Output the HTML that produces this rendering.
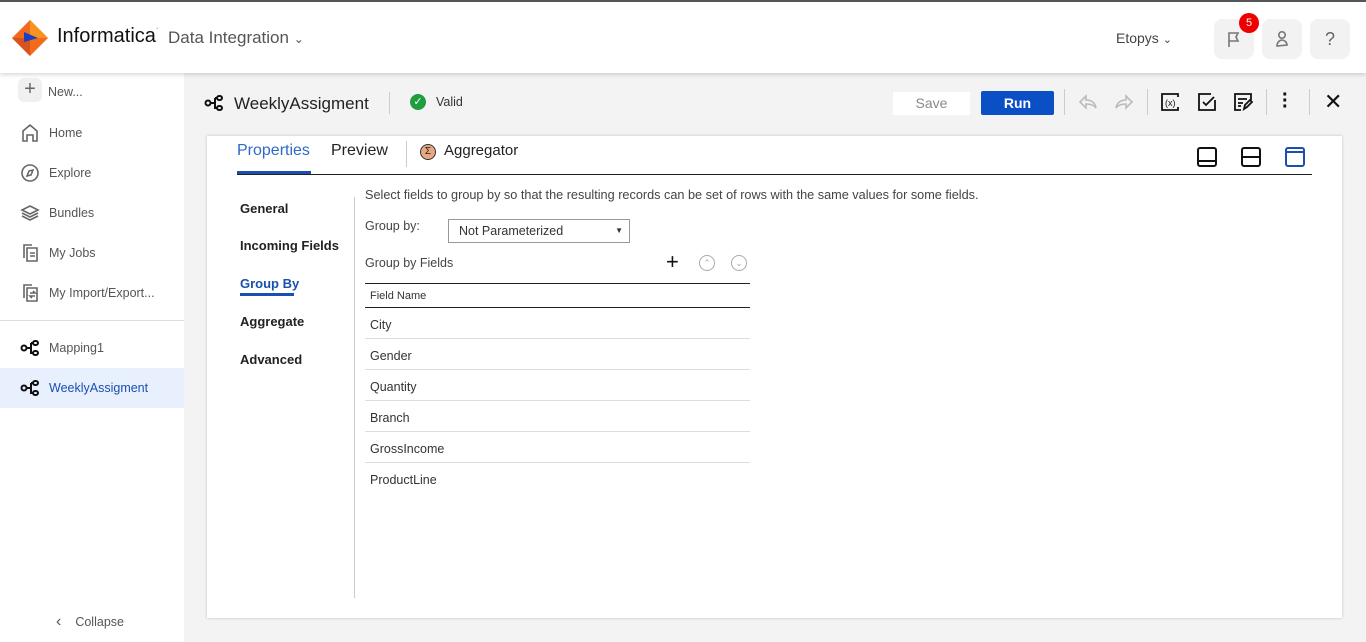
<!DOCTYPE html>
<html><head><style>
*{box-sizing:border-box;margin:0;padding:0}
body{width:1366px;height:642px;overflow:hidden;font-family:"Liberation Sans",sans-serif;background:#f3f3f3;position:relative;color:#222}
.abs{position:absolute}
#hdr{left:0;top:0;width:1366px;height:73px;background:#fff;border-top:2px solid #555;box-shadow:0 2px 4px rgba(0,0,0,.15);z-index:2}
#side{left:0;top:73px;width:184px;height:569px;background:#fff}
.nav{position:absolute;left:20px;font-size:12px;color:#555;display:flex;align-items:center}
.nav svg{margin-right:9px}
.ib{position:absolute;top:17px;width:40px;height:40px;border-radius:8px;background:#f2f2f2;display:flex;align-items:center;justify-content:center;color:#666}
#panel{left:207px;top:136px;width:1135px;height:482px;background:#fff;box-shadow:0 0 3px rgba(0,0,0,.2)}
.row{position:absolute;left:365px;width:385px;height:31px;border-bottom:1px solid #ddd;font-size:12.5px;color:#333;padding:10px 0 0 5px}
.tl{position:absolute;font-size:13px;font-weight:bold;color:#222}
</style></head><body>
<div id="hdr" class="abs">
 <svg class="abs" style="left:12px;top:18px" width="36" height="36" viewBox="0 0 36 36"><polygon points="18,0 36,18 18,36 0,18" fill="#f26b1d"/><polygon points="18,0 36,18 18,18" fill="#f7941d"/><polygon points="0,18 18,36 18,18" fill="#d9531e"/><polygon points="12,12 26,18 12,22" fill="#1a3fc4"/></svg>
 <div class="abs" style="left:57px;top:23px;font-size:20px;color:#111">Informatica<span style="font-size:7px;vertical-align:top">·</span></div>
 <div class="abs" style="left:168px;top:26px;font-size:17px;color:#555">Data Integration <span style="font-size:12px">&#8964;</span></div>
 <div class="abs" style="left:1116px;top:28px;font-size:14px;color:#444">Etopys <span style="font-size:11px">&#8964;</span></div>
 <div class="ib" style="left:1214px"><svg width="16" height="18" viewBox="0 0 16 18" fill="none" stroke="#777" stroke-width="1.6"><path d="M3 17V3h9l-2 4 2 4H3"/></svg></div>
 <div class="abs" style="left:1239px;top:11px;width:20px;height:20px;border-radius:50%;background:#e00;color:#fff;font-size:11px;text-align:center;line-height:20px">5</div>
 <div class="ib" style="left:1262px"><svg width="16" height="18" viewBox="0 0 16 18" fill="none" stroke="#777" stroke-width="1.6"><circle cx="8" cy="5" r="3.2"/><path d="M3 16c0-4 3-6 5-6s5 2 5 5z"/></svg></div>
 <div class="ib" style="left:1310px;font-size:18px">?</div>
</div>
<div id="side" class="abs">
 <div class="abs" style="left:18px;top:5px;width:24px;height:24px;border-radius:6px;background:#f0f0f0;text-align:center;line-height:23px;font-size:20px;color:#666">+</div>
 <div class="nav" style="top:12px;left:48px;font-size:12.5px">New...</div>
 <div class="nav" style="top:50px;font-size:12.5px"><svg width="20" height="20" viewBox="0 0 20 20" fill="none" stroke="#666" stroke-width="1.6"><path d="M3 18V8l7-6 7 6v10h-4v-6H7v6z"/></svg>Home</div>
 <div class="nav" style="top:90px;font-size:12.5px"><svg width="20" height="20" viewBox="0 0 20 20" fill="none" stroke="#666" stroke-width="1.6"><circle cx="10" cy="10" r="8"/><path d="M7 13l2-5 4-1-2 5z"/></svg>Explore</div>
 <div class="nav" style="top:130px;font-size:12.5px"><svg width="20" height="20" viewBox="0 0 20 20" fill="none" stroke="#666" stroke-width="1.6"><path d="M10 3l8 4-8 4-8-4z M2 10l8 4 8-4 M2 13l8 4 8-4"/></svg>Bundles</div>
 <div class="nav" style="top:170px;font-size:12.5px"><svg width="20" height="20" viewBox="0 0 20 20" fill="none" stroke="#666" stroke-width="1.6"><path d="M4 15V2h8 M7 5h10v13H7z M10 10h5 M10 13h5"/></svg>My Jobs</div>
 <div class="nav" style="top:210px;font-size:12.5px"><svg width="20" height="20" viewBox="0 0 20 20" fill="none" stroke="#666" stroke-width="1.6"><path d="M4 15V2h8 M7 5h10v13H7z M10 10h5l-2-2 M15 13h-5l2 2"/></svg>My Import/Export...</div>
 <div class="abs" style="left:0;top:247px;width:184px;height:1px;background:#ddd"></div>
 <div class="nav" style="top:267px;font-size:12.5px"><svg width="20" height="16" viewBox="0 0 20 16" fill="none" stroke="#111" stroke-width="2"><circle cx="4" cy="8" r="2.5"/><rect x="13" y="1" width="5" height="4" rx="2"/><rect x="13" y="11" width="5" height="4" rx="2"/><path d="M6.5 8h4 M11 3v10h2 M11 3h2"/></svg>Mapping1</div>
 <div class="abs" style="left:0;top:295px;width:184px;height:40px;background:#e8f0fd"></div>
 <div class="nav" style="top:307px;color:#1a4fb0;font-size:12.5px"><svg width="20" height="16" viewBox="0 0 20 16" fill="none" stroke="#111" stroke-width="2"><circle cx="4" cy="8" r="2.5"/><rect x="13" y="1" width="5" height="4" rx="2"/><rect x="13" y="11" width="5" height="4" rx="2"/><path d="M6.5 8h4 M11 3v10h2 M11 3h2"/></svg>WeeklyAssigment</div>
 <div class="nav" style="top:540px;left:56px;color:#555;font-size:12.5px"><span style="font-size:16px;margin-right:14px">&#8249;</span>Collapse</div>
</div>
<svg class="abs" style="left:204px;top:95px" width="20" height="16" viewBox="0 0 20 16" fill="none" stroke="#111" stroke-width="2"><circle cx="4" cy="8" r="2.5"/><rect x="13" y="1" width="5" height="4" rx="2"/><rect x="13" y="11" width="5" height="4" rx="2"/><path d="M6.5 8h4 M11 3v10h2 M11 3h2"/></svg>
<div class="abs" style="left:234px;top:94px;font-size:17px;color:#222">WeeklyAssigment</div>
<div class="abs" style="left:389px;top:92px;width:1px;height:22px;background:#ccc"></div>
<div class="abs" style="left:410px;top:94px;width:16px;height:16px;border-radius:50%;background:#1e9e3e;color:#fff;font-size:11px;text-align:center;line-height:16px">&#10003;</div>
<div class="abs" style="left:436px;top:95px;font-size:12.5px;color:#333">Valid</div>
<div class="abs" style="left:893px;top:92px;width:77px;height:23px;background:#fff;color:#888;font-size:14px;text-align:center;line-height:23px">Save</div>
<div class="abs" style="left:981px;top:91px;width:73px;height:24px;background:#0b4fc7;color:#fff;font-size:14px;font-weight:bold;text-align:center;line-height:24px;border-radius:2px">Run</div>
<div class="abs" style="left:1064px;top:89px;width:1px;height:26px;background:#ccc"></div>
<div class="abs" style="left:1147px;top:89px;width:1px;height:26px;background:#ccc"></div>
<div class="abs" style="left:1266px;top:89px;width:1px;height:26px;background:#ccc"></div>
<div class="abs" style="left:1309px;top:89px;width:1px;height:26px;background:#ccc"></div>
<svg class="abs" style="left:1078px;top:94px" width="20" height="16" viewBox="0 0 20 16" fill="none" stroke="#bbb" stroke-width="1.6"><path d="M8 2L2 8l6 6V10c5 0 8 1 10 4-1-5-4-8-10-8z"/></svg>
<svg class="abs" style="left:1114px;top:94px" width="20" height="16" viewBox="0 0 20 16" fill="none" stroke="#bbb" stroke-width="1.6"><path d="M12 2l6 6-6 6V10c-5 0-8 1-10 4 1-5 4-8 10-8z"/></svg>
<svg class="abs" style="left:1160px;top:92px" width="20" height="20" viewBox="0 0 20 20" fill="none" stroke="#111" stroke-width="1.8"><path d="M5 2H2v16h16v-3 M18 5V2H5"/><text x="5" y="14" font-size="9" fill="#111" stroke="none" font-family="Liberation Sans">(x)</text></svg>
<svg class="abs" style="left:1197px;top:92px" width="20" height="20" viewBox="0 0 20 20" fill="none" stroke="#111" stroke-width="1.8"><path d="M18 8v10H2V2h12 M6 10l3 3 8-8"/></svg>
<svg class="abs" style="left:1233px;top:92px" width="20" height="20" viewBox="0 0 20 20" fill="none" stroke="#111" stroke-width="1.8"><path d="M18 8V2H2v16h6 M5 7h9 M5 11h5 M5 14h3 M11 17l1-4 5-5 2 2-5 5z"/></svg>
<div class="abs" style="left:1282px;top:92px;font-size:20px;font-weight:bold;line-height:6px;color:#111">·<br>·<br>·</div>
<div class="abs" style="left:1324px;top:89px;font-size:22px;color:#111">&#10005;</div>
<div id="panel" class="abs"></div>
<div class="abs" style="left:237px;top:142px;font-size:16px;color:#2d6ac4">Properties</div>
<div class="abs" style="left:237px;top:171px;width:74px;height:3px;background:#1a4fb0"></div>
<div class="abs" style="left:331px;top:142px;font-size:16px;color:#222">Preview</div>
<div class="abs" style="left:406px;top:141px;width:1px;height:26px;background:#ccc"></div>
<div class="abs" style="left:420px;top:144px;width:16px;height:16px;border-radius:50%;background:#e8a883;border:1.5px solid #333;font-size:10px;text-align:center;line-height:13px">&Sigma;</div>
<div class="abs" style="left:444px;top:142px;font-size:15px;color:#222">Aggregator</div>
<div class="abs" style="left:237px;top:174px;width:1075px;height:1px;background:#222"></div>
<svg class="abs" style="left:1197px;top:147px" width="20" height="20" viewBox="0 0 20 20" fill="none" stroke="#111" stroke-width="2"><rect x="1" y="1" width="18" height="18" rx="2"/><path d="M1 14h18"/></svg>
<svg class="abs" style="left:1241px;top:147px" width="20" height="20" viewBox="0 0 20 20" fill="none" stroke="#111" stroke-width="2"><rect x="1" y="1" width="18" height="18" rx="2"/><path d="M1 10h18"/></svg>
<svg class="abs" style="left:1285px;top:147px" width="20" height="20" viewBox="0 0 20 20" fill="none" stroke="#1a4fb0" stroke-width="2"><rect x="1" y="1" width="18" height="18" rx="2"/><path d="M1 5h18"/></svg>
<div class="tl" style="left:240px;top:201px">General</div>
<div class="tl" style="left:240px;top:238px">Incoming Fields</div>
<div class="tl" style="left:240px;top:276px;color:#1a4fb0">Group By</div>
<div class="abs" style="left:240px;top:293px;width:54px;height:3px;background:#1a4fb0"></div>
<div class="tl" style="left:240px;top:314px">Aggregate</div>
<div class="tl" style="left:240px;top:352px">Advanced</div>
<div class="abs" style="left:354px;top:197px;width:1px;height:401px;background:#ccc"></div>
<div class="abs" style="left:365px;top:188px;font-size:12.7px;color:#444">Select fields to group by so that the resulting records can be set of rows with the same values for some fields.</div>
<div class="abs" style="left:365px;top:219px;font-size:12.5px;color:#444">Group by:</div>
<div class="abs" style="left:448px;top:219px;width:182px;height:24px;border:1px solid #999;font-size:12.5px;color:#333;padding:4px 0 0 10px">Not Parameterized<span style="position:absolute;right:6px;top:6px;font-size:8px">&#9660;</span></div>
<div class="abs" style="left:365px;top:256px;font-size:12.5px;color:#444">Group by Fields</div>
<div class="abs" style="left:666px;top:249px;font-size:22px;color:#111">+</div>
<div class="abs" style="left:699px;top:255px;width:16px;height:16px;border-radius:50%;border:1px solid #aaa;font-size:9px;color:#aaa;text-align:center;line-height:14px">&#8963;</div>
<div class="abs" style="left:731px;top:255px;width:16px;height:16px;border-radius:50%;border:1px solid #aaa;font-size:9px;color:#aaa;text-align:center;line-height:14px">&#8964;</div>
<div class="abs" style="left:365px;top:283px;width:385px;height:1px;background:#222"></div>
<div class="abs" style="left:370px;top:290px;font-size:11px;color:#333">Field Name</div>
<div class="abs" style="left:365px;top:307px;width:385px;height:1px;background:#222"></div>
<div class="row" style="top:308px">City</div>
<div class="row" style="top:339px">Gender</div>
<div class="row" style="top:370px">Quantity</div>
<div class="row" style="top:401px">Branch</div>
<div class="row" style="top:432px">GrossIncome</div>
<div class="row" style="top:463px;border:none">ProductLine</div>
</body></html>
